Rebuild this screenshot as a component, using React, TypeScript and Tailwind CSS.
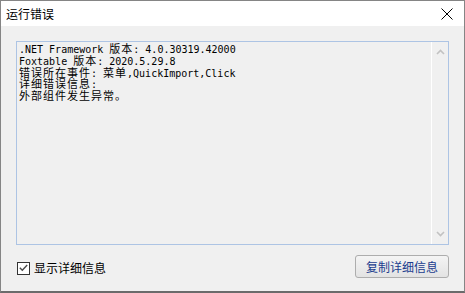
const cjk = "font-['Noto_Sans_CJK_SC',sans-serif]";

function Mono({ children }: { children: React.ReactNode }) {
  return <span className="font-['DejaVu_Sans_Mono',monospace] text-[10px] leading-[12px]">{children}</span>;
}

function Han({ children }: { children: React.ReactNode }) {
  return <span className={`${cjk} text-[11px] leading-[12px] tracking-[1px]`}>{children}</span>;
}

function Line({ children }: { children: React.ReactNode }) {
  return <div className="h-[11.8px] flex items-baseline">{children}</div>;
}

export default function App() {
  return (
    <div className="w-[465px] h-[293px] bg-[#f0f0f0] border border-[#858585] border-b-2 border-b-[#6b6b6b] flex flex-col text-black overflow-hidden">
      {/* title bar */}
      <div className="h-[25px] bg-white flex items-center justify-between pl-[5px] pr-[11px] shrink-0">
        <span className={`${cjk} text-[12px] leading-none`}>运行错误</span>
        <svg width="12" height="12" viewBox="0 0 12 12" className="text-black">
          <path d="M0.5 0.5 L11.5 11.5 M11.5 0.5 L0.5 11.5" stroke="currentColor" strokeWidth="1" fill="none" />
        </svg>
      </div>

      <div className="flex flex-col pt-[15px] pl-[15px]">
        {/* read-only text box */}
        <div className="w-[433px] h-[204px] border border-[#adc4e4] flex">
          <div className="flex-1 pl-[2px] whitespace-pre">
            <Line>
              <Mono>.NET Framework </Mono>
              <Han>版本</Han>
              <Mono>: 4.0.30319.42000</Mono>
            </Line>
            <Line>
              <Mono>Foxtable </Mono>
              <Han>版本</Han>
              <Mono>: 2020.5.29.8</Mono>
            </Line>
            <Line>
              <Han>错误所在事件</Han>
              <Mono>: </Mono>
              <Han>菜单</Han>
              <Mono>,QuickImport,Click</Mono>
            </Line>
            <Line>
              <Han>详细错误信息</Han>
              <Mono>:</Mono>
            </Line>
            <Line>
              <Han>外部组件发生异常。</Han>
            </Line>
          </div>
          {/* scrollbar */}
          <div className="w-[17px] border-l border-white flex flex-col justify-between items-center py-[7px]">
            <svg width="9" height="6" viewBox="0 0 9 6">
              <path d="M1 5 L4.5 1.5 L8 5" stroke="#c2c2c2" strokeWidth="1.6" fill="none" />
            </svg>
            <svg width="9" height="6" viewBox="0 0 9 6">
              <path d="M1 1 L4.5 4.5 L8 1" stroke="#c2c2c2" strokeWidth="1.6" fill="none" />
            </svg>
          </div>
        </div>

        {/* bottom row */}
        <div className="w-[433px] mt-[10px] h-[23px] flex items-center justify-between">
          <label className="flex items-center gap-[4px] pl-[1px] pt-[3px]">
            <span className="w-[13px] h-[13px] border border-[#333333] bg-white flex items-center justify-center">
              <svg width="9" height="8" viewBox="0 0 9 8">
                <path d="M0.8 3.8 L3.3 6.3 L8.2 1" stroke="#4a4a4a" strokeWidth="1.4" fill="none" />
              </svg>
            </span>
            <span className={`${cjk} text-[12px] leading-none`}>显示详细信息</span>
          </label>
          <button className="w-[94px] h-[23px] border border-[#adadad] rounded-[3px] bg-gradient-to-b from-[#f4f4f4] to-[#e3e3e3] flex items-center justify-center">
            <span className={`${cjk} text-[12px] leading-none text-[#1b3d8e]`}>复制详细信息</span>
          </button>
        </div>
      </div>
    </div>
  );
}
